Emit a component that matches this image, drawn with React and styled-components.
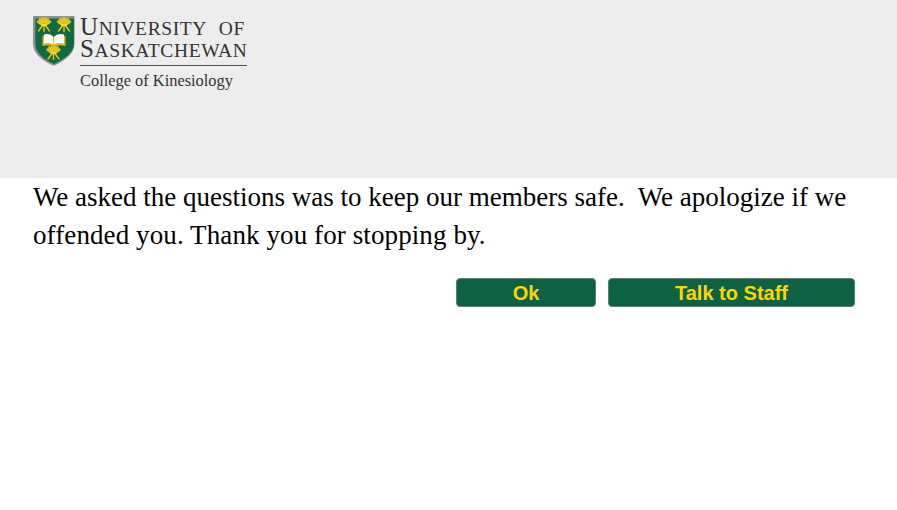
import React from "react";
import styled, { createGlobalStyle } from "styled-components";

const Global = createGlobalStyle`
  html, body { margin: 0; padding: 0; background: #fff; }
`;
const Page = styled.div`
  width: 897px;
  min-height: 510px;
  background: #fff;
`;
const Header = styled.header`
  height: 178px;
  box-sizing: border-box;
  background: #ededed;
  padding: 16px 0 0 33px;
`;
const Logo = styled.div`
  display: flex;
  align-items: flex-start;
  gap: 5px;
`;
const ShieldSvg = styled.svg`
  display: block;
  flex: none;
`;
const Wordmark = styled.div`
  width: 167px;
  font-family: "Liberation Serif", serif;
  color: #333;
`;
const Name = styled.div`
  font-size: 25px;
  line-height: 22px;
  white-space: pre;
  letter-spacing: 0.6px;
  word-spacing: 7px;
`;
const Small = styled.span`
  font-size: 19.5px;
  line-height: 0;
`;
const Rule = styled.div`
  height: 1px;
  background: #1f6a4a;
  margin-top: 5px;
`;
const College = styled.div`
  font-size: 16.4px;
  line-height: 18px;
  margin-top: 6px;
  white-space: nowrap;
`;
const Message = styled.p`
  margin: 0;
  padding: 0 33px;
  font-family: "Liberation Serif", serif;
  font-size: 27px;
  line-height: 38px;
  color: #000;
  white-space: pre-wrap;
`;
const Tail = styled.span`
  letter-spacing: 0.1px;
`;
const Actions = styled.div`
  display: flex;
  justify-content: flex-end;
  gap: 12px;
  padding: 24px 42px 0 0;
`;
const Button = styled.button`
  width: ${p => p.$w}px;
  height: 29px;
  padding: 1px 0 0;
  border: 1px solid #5d7f6f;
  border-radius: 4px;
  background: #0c6242;
  color: #ffd500;
  font-family: "Liberation Sans", sans-serif;
  font-size: 20px;
  font-weight: 700;
`;

const Sheaf = ({ x, y }) => (
  <g transform={`translate(${x} ${y}) scale(1.25)`} fill="#e6c51e" stroke="#e6c51e">
    {[-60, -36, -12, 12, 36, 60].map(a => (
      <ellipse key={a} cx="0" cy="-3.8" rx="1.2" ry="2.6" strokeWidth="0.3" transform={`rotate(${a})`} />
    ))}
    <rect x="-2.4" y="-0.8" width="4.8" height="1.8" strokeWidth="0" fill="#f4dc3a" />
    <path d="M-1.6 1L-4.4 4.8M0 1V5.2M1.6 1L4.4 4.8" fill="none" strokeWidth="1.1" strokeLinecap="round" />
  </g>
);

const Shield = () => (
  <ShieldSvg width="42" height="50" viewBox="0 0 42 50" aria-hidden="true">
    <path d="M0 0H41.5V28C41.5 38 31 45 20.8 49.8C10 45 0 38 0 28Z" fill="#8c908e" />
    <path d="M2.4 2.4H41V28C41 37 30.5 43.5 20.8 48C11 43.5 2.4 37 2.4 28Z" fill="#106b42" />
    <Sheaf x={11} y={9} />
    <Sheaf x={31} y={9} />
    <Sheaf x={20.5} y={37} />
    <path d="M9.5 20Q15.5 17.5 20.7 21Q26 17.5 32.5 20V30Q26 28 20.7 31Q15.5 28 9.5 30Z" fill="#e6b51c" />
    <path d="M11 18.5Q16 17 20.2 20.5V28.5Q16 26.2 11 27.5Z" fill="#fff" />
    <path d="M21.2 20.5Q25.5 17 31 18.5V27.5Q25.5 26.2 21.2 28.5Z" fill="#fff" />
  </ShieldSvg>
);

export default function App() {
  return (
    <Page>
      <Global />
      <Header>
        <Logo>
          <Shield />
          <Wordmark>
            <Name>U<Small>NIVERSITY OF</Small><br />S<Small>ASKATCHEWAN</Small></Name>
            <Rule />
            <College>College of Kinesiology</College>
          </Wordmark>
        </Logo>
      </Header>
      <Message>{"We asked the questions was to keep our members safe.  We apologize if we "}<Tail>offended you. Thank you for stopping by.</Tail></Message>
      <Actions>
        <Button $w={140}>Ok</Button>
        <Button $w={247}>Talk to Staff</Button>
      </Actions>
    </Page>
  );
}
